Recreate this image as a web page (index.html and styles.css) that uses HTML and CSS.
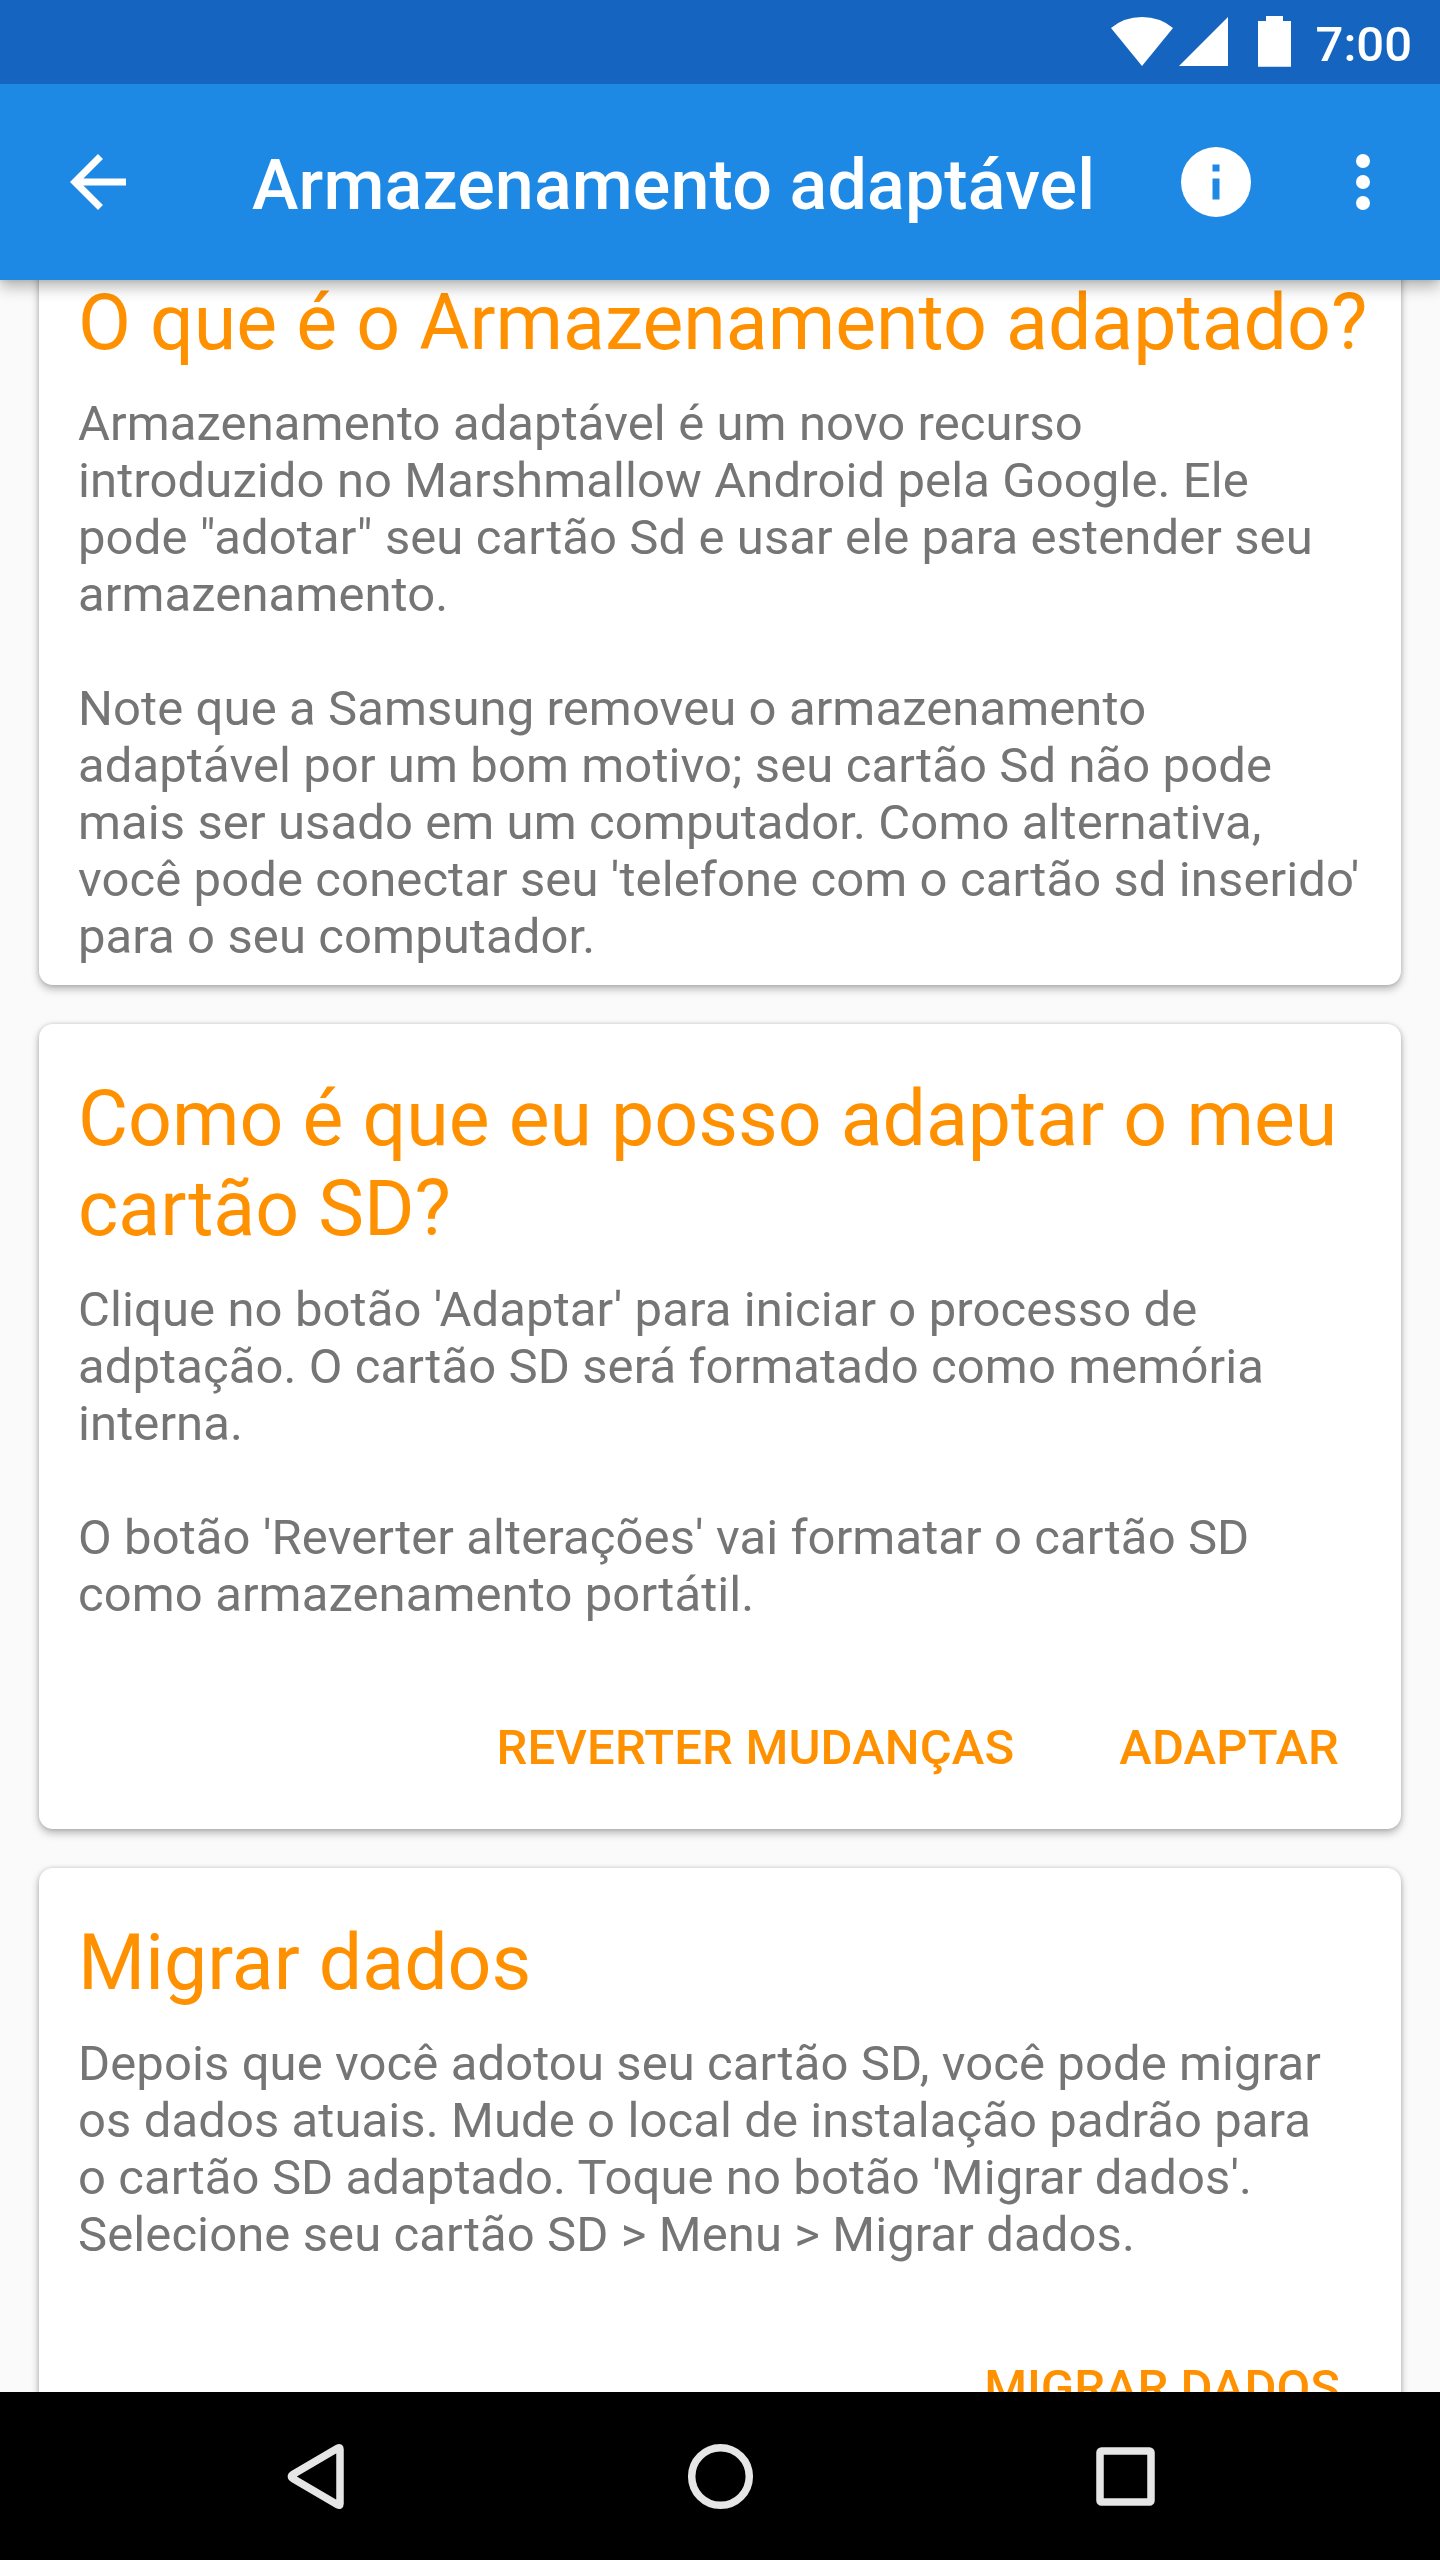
FILE: index.html
```html
<!DOCTYPE html>
<html lang="pt">
<head>
<meta charset="utf-8">
<title>Armazenamento adaptável</title>
<link rel="stylesheet" href="styles.css">
</head>
<body>
<div class="screen">
  <div class="status-bar">
    <svg class="status-icons" viewBox="0 0 180 84" fill="#fff">
      <path d="M0 28Q13 17 31 17T62 28L31 66Z"/>
      <path d="M68 66L117 17V66Z"/>
      <path d="M155 16h17v5h8v45.700h-33V21h8z"/>
    </svg>
    <span class="clock">7:00</span>
  </div>
  <header class="toolbar">
    <svg class="icon" viewBox="0 0 24 24"><path d="M20 11H7.830l5.590-5.590L12 4l-8 8 8 8 1.410-1.410L7.830 13H20z"/></svg>
    <h1 class="toolbar-title">Armazenamento adaptável</h1>
    <div class="actions">
      <svg class="icon" viewBox="0 0 24 24"><path d="M12 2a10 10 0 1 0 0 20 10 10 0 0 0 0-20zm1 15h-2v-6h2zm0-8h-2V7h2z"/></svg>
      <svg class="icon" viewBox="0 0 24 24"><circle cx="12" cy="6" r="2"/><circle cx="12" cy="12" r="2"/><circle cx="12" cy="18" r="2"/></svg>
    </div>
  </header>
  <main class="content">
    <div class="cards">
      <section class="card">
        <h2 class="card-title">O que é o Armazenamento adaptado?</h2>
        <p class="card-text">Armazenamento adaptável é um novo recurso<br>introduzido no Marshmallow Android pela Google. Ele<br>pode "adotar" seu cartão Sd e usar ele para estender seu<br>armazenamento.</p>
        <p class="card-text">Note que a Samsung removeu o armazenamento<br>adaptável por um bom motivo; seu cartão Sd não pode<br>mais ser usado em um computador. Como alternativa,<br>você pode conectar seu 'telefone com o cartão sd inserido'<br>para o seu computador.</p>
      </section>
      <section class="card">
        <h2 class="card-title">Como é que eu posso adaptar o meu<br>cartão SD?</h2>
        <p class="card-text">Clique no botão 'Adaptar' para iniciar o processo de<br>adptação. O cartão SD será formatado como memória<br>interna.</p>
        <p class="card-text">O botão 'Reverter alterações' vai formatar o cartão SD<br>como armazenamento portátil.</p>
        <div class="card-actions">
          <button class="action">REVERTER MUDANÇAS</button>
          <button class="action">ADAPTAR</button>
        </div>
      </section>
      <section class="card">
        <h2 class="card-title">Migrar dados</h2>
        <p class="card-text">Depois que você adotou seu cartão SD, você pode migrar<br>os dados atuais. Mude o local de instalação padrão para<br>o cartão SD adaptado. Toque no botão 'Migrar dados'.<br>Selecione seu cartão SD &gt; Menu &gt; Migrar dados.</p>
        <div class="card-actions single">
          <button class="action">MIGRAR DADOS</button>
        </div>
      </section>
    </div>
  </main>
  <nav class="nav-bar">
    <svg class="nav-icon" viewBox="0 0 84 84"><path d="M20.200 40.300L65 14Q67 13 67 15.200V69.800Q67 72 65 71L20.200 44.700Q16.600 42.500 20.200 40.300Z"/></svg>
    <svg class="nav-icon" viewBox="0 0 84 84"><circle cx="42.500" cy="42.500" r="28.800"/></svg>
    <svg class="nav-icon" viewBox="0 0 84 84"><rect x="17" y="17" width="51" height="51" rx="1.500"/></svg>
  </nav>
</div>
</body>
</html>
```
FILE: styles.css
```css
body {
  margin: 0;
  font-family: Roboto, "Noto Sans", sans-serif;
}

.screen {
  display: flex;
  flex-direction: column;
  width: 1440px;
  height: 2560px;
  overflow: hidden;
  background: #fafafa;
}

.status-bar {
  position: relative;
  z-index: 2;
  display: flex;
  flex: none;
  justify-content: flex-end;
  gap: 25px;
  height: 84px;
  padding-right: 28px;
  box-sizing: border-box;
  background: #1565c0;
}

.status-icons {
  width: 180px;
  height: 84px;
}

.clock {
  color: #fff;
  font-size: 49px;
  font-weight: 500;
  line-height: 89px;
}

.toolbar {
  position: relative;
  z-index: 1;
  display: flex;
  flex: none;
  align-items: center;
  height: 196px;
  padding: 0 35px 0 56px;
  box-sizing: border-box;
  background: #1e88e5;
  box-shadow: 0 7px 14px rgba(0, 0, 0, 0.28), 0 0 5px rgba(0, 0, 0, 0.12);
}

.toolbar-title {
  margin: 0 0 0 112px;
  padding-top: 6px;
  color: #fff;
  font-size: 70px;
  font-weight: 500;
  line-height: 82px;
  letter-spacing: 0.13px;
  white-space: nowrap;
}

.icon {
  flex: none;
  width: 84px;
  height: 84px;
  fill: #fff;
}

.actions {
  display: flex;
  gap: 63px;
  margin-left: auto;
}

.content {
  flex: 1;
  min-height: 0;
  overflow: hidden;
}

.cards {
  display: flex;
  flex-direction: column;
  gap: 39px;
  margin: -52px 39px 0;
}

.card {
  padding: 50px 0 20px 39px;
  border-radius: 14px;
  background: #fff;
  box-shadow: 0 4px 9px rgba(0, 0, 0, 0.28), 0 0 4px rgba(0, 0, 0, 0.14);
}

.card-title {
  margin: 0 0 27px;
  color: #ff9100;
  font-size: 77px;
  font-weight: 400;
  line-height: 90px;
  white-space: nowrap;
}

.card-text {
  margin: 0;
  color: #757575;
  font-size: 49px;
  line-height: 57px;
  letter-spacing: 0.1px;
  white-space: nowrap;
}

.card-text + .card-text {
  margin-top: 57px;
}

.card-actions {
  display: flex;
  justify-content: flex-end;
  gap: 105px;
  padding: 96px 62px 33px 0;
}

.card-actions.single {
  padding-right: 61px;
}

.action {
  padding: 0;
  border: 0;
  background: none;
  color: #ff9100;
  font: 500 49px/57px Roboto, "Noto Sans", sans-serif;
  letter-spacing: 0.14px;
}

.single .action {
  letter-spacing: 0;
}

.nav-bar {
  display: flex;
  flex: none;
  align-items: center;
  justify-content: center;
  gap: 321px;
  height: 168px;
  background: #000;
}

.nav-icon {
  width: 84px;
  height: 84px;
  fill: none;
  stroke: #e6e6e6;
  stroke-width: 7.5;
  stroke-linejoin: round;
}
```
